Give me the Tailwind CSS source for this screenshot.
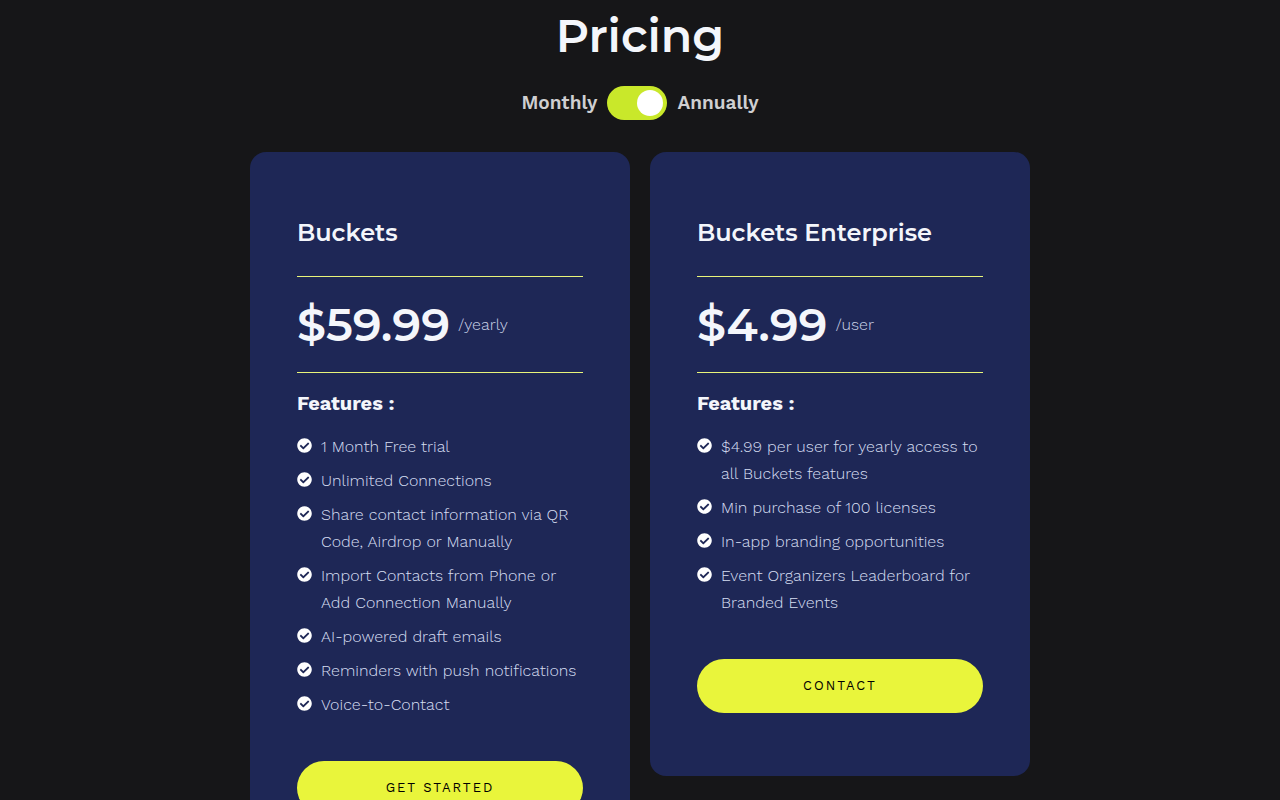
<!DOCTYPE html>
<html lang="en">
<head>
  <meta charset="UTF-8">
  <meta name="viewport" content="width=device-width, initial-scale=1.0">
  <title>Pricing</title>
  <script src="https://cdn.jsdelivr.net/npm/@tailwindcss/browser@4"></script>
</head>
<body class="bg-[#161618] font-['Work_Sans','Inter',sans-serif] text-[#f4f6fb] overflow-x-hidden">

  <!-- Check icon used by every feature row -->
  <svg class="hidden" aria-hidden="true">
    <symbol id="check" viewBox="0 0 512 512">
      <path fill="currentColor" d="M504 256c0 137-111 248-248 248S8 393 8 256 119 8 256 8s248 111 248 248zM227.300 387.300l184-184c6.200-6.200 6.200-16.400 0-22.600l-22.600-22.600c-6.200-6.200-16.400-6.200-22.600 0L216 308.100l-70.100-70.100c-6.200-6.200-16.400-6.200-22.600 0l-22.600 22.600c-6.200 6.200-6.200 16.400 0 22.600l104 104c6.200 6.200 16.400 6.200 22.600 0z"/>
    </symbol>
  </svg>

  <main class="mx-auto max-w-[780px]">
    <h1 class="pt-1 text-center font-['Montserrat','Inter',sans-serif] text-[46px] leading-[64px] font-semibold">Pricing</h1>

    <!-- Billing toggle -->
    <div class="mt-[18px] flex items-center justify-center gap-2.5 text-[19px] leading-[34px] font-semibold text-[#cfcfd1]">
      <label for="billing">Monthly</label>
      <label class="flex h-[34px] w-[60px] cursor-pointer items-center rounded-full bg-[#c9e82a] px-1">
        <input id="billing" type="checkbox" checked aria-label="Bill annually" class="peer sr-only">
        <span class="size-[26px] rounded-full bg-white peer-checked:ml-auto"></span>
      </label>
      <label for="billing">Annually</label>
    </div>

    <!-- Plans -->
    <div class="mt-8 grid grid-cols-1 items-start gap-5 md:grid-cols-2">
      <section class="rounded-2xl bg-[#1e2756] px-[47px] py-[63px]">
        <h2 class="font-['Montserrat','Inter',sans-serif] text-2xl leading-[36px] font-semibold">Buckets</h2>
        <div class="mt-[25px] flex h-[97px] items-center gap-2 border-y border-[#e9f57a]">
          <span class="font-['Montserrat','Inter',sans-serif] text-[46px] leading-[60px] font-semibold">$59.99</span>
          <span class="font-light text-[#ccd3e8]">/yearly</span>
        </div>
        <h3 class="mt-[15px] text-xl leading-[30px] font-bold">Features :</h3>
        <ul class="mt-[15px] flex flex-col gap-[7px] leading-[27px] font-light text-[#d6def2]">
          <li class="flex gap-[9px]"><svg class="mt-[5px] size-[15px] shrink-0 text-white"><use href="#check"/></svg><span>1 Month Free trial</span></li>
          <li class="flex gap-[9px]"><svg class="mt-[5px] size-[15px] shrink-0 text-white"><use href="#check"/></svg><span>Unlimited Connections</span></li>
          <li class="flex gap-[9px]"><svg class="mt-[5px] size-[15px] shrink-0 text-white"><use href="#check"/></svg><span>Share contact information via QR Code, Airdrop or Manually</span></li>
          <li class="flex gap-[9px]"><svg class="mt-[5px] size-[15px] shrink-0 text-white"><use href="#check"/></svg><span>Import Contacts from Phone or Add Connection Manually</span></li>
          <li class="flex gap-[9px]"><svg class="mt-[5px] size-[15px] shrink-0 text-white"><use href="#check"/></svg><span>AI-powered draft emails</span></li>
          <li class="flex gap-[9px]"><svg class="mt-[5px] size-[15px] shrink-0 text-white"><use href="#check"/></svg><span>Reminders with push notifications</span></li>
          <li class="flex gap-[9px]"><svg class="mt-[5px] size-[15px] shrink-0 text-white"><use href="#check"/></svg><span>Voice-to-Contact</span></li>
        </ul>
        <button type="button" class="mt-[43px] h-[54px] w-full cursor-pointer rounded-full bg-[#e9f53b] text-[13px] tracking-[2px] text-black uppercase">Get Started</button>
      </section>

      <section class="rounded-2xl bg-[#1e2756] px-[47px] py-[63px]">
        <h2 class="font-['Montserrat','Inter',sans-serif] text-2xl leading-[36px] font-semibold">Buckets Enterprise</h2>
        <div class="mt-[25px] flex h-[97px] items-center gap-2 border-y border-[#e9f57a]">
          <span class="font-['Montserrat','Inter',sans-serif] text-[46px] leading-[60px] font-semibold">$4.99</span>
          <span class="font-light text-[#ccd3e8]">/user</span>
        </div>
        <h3 class="mt-[15px] text-xl leading-[30px] font-bold">Features :</h3>
        <ul class="mt-[15px] flex flex-col gap-[7px] leading-[27px] font-light text-[#d6def2]">
          <li class="flex gap-[9px]"><svg class="mt-[5px] size-[15px] shrink-0 text-white"><use href="#check"/></svg><span>$4.99 per user for yearly access to all Buckets features</span></li>
          <li class="flex gap-[9px]"><svg class="mt-[5px] size-[15px] shrink-0 text-white"><use href="#check"/></svg><span>Min purchase of 100 licenses</span></li>
          <li class="flex gap-[9px]"><svg class="mt-[5px] size-[15px] shrink-0 text-white"><use href="#check"/></svg><span>In-app branding opportunities</span></li>
          <li class="flex gap-[9px]"><svg class="mt-[5px] size-[15px] shrink-0 text-white"><use href="#check"/></svg><span>Event Organizers Leaderboard for Branded Events</span></li>
        </ul>
        <button type="button" class="mt-[43px] h-[54px] w-full cursor-pointer rounded-full bg-[#e9f53b] text-[13px] tracking-[2px] text-black uppercase">Contact</button>
      </section>
    </div>
  </main>

</body>
</html>
